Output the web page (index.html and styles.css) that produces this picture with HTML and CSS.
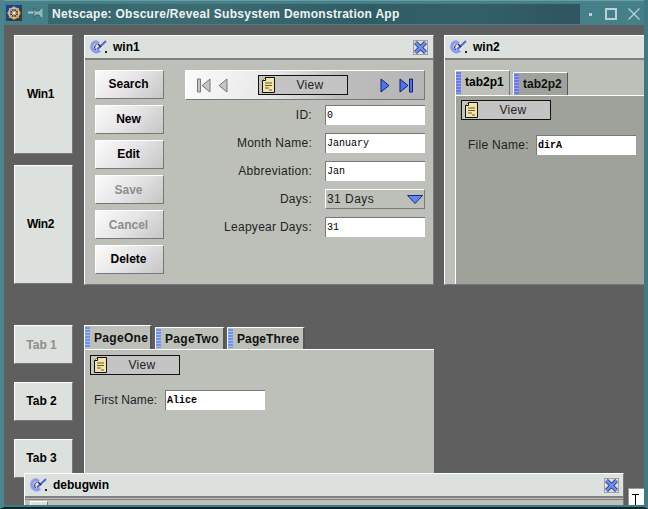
FILE: index.html
```html
<!DOCTYPE html>
<html lang="en">
<head>
<meta charset="utf-8">
<title>Netscape: Obscure/Reveal Subsystem Demonstration App</title>
<link rel="stylesheet" href="styles.css">
</head>
<body>
<svg class="defs" width="0" height="0" aria-hidden="true">
  <defs>
    <symbol id="note" viewBox="0 0 13 16">
      <path d="M3.500.5H12.500V15.500H.5V3.500Z" fill="#f3e3a6" stroke="#111"/>
      <path d="M3.500.5V3.500H.5" fill="#fff8d8" stroke="#111"/>
      <path d="M3 6H10M3 8.500H10M3 11H7M7 13H10" stroke="#6b5f30" fill="none"/>
    </symbol>
    <symbol id="winicon" viewBox="0 0 18 14">
      <path d="M8.500 3.500C6.500 1 2 1.500 1.800 6.500C1.600 11 6.500 13.500 10 10.500" fill="none" stroke="#8d9af2" stroke-width="3.200"/>
      <path d="M5.500 10C4 8 4.500 5 6.500 4.500" fill="none" stroke="#1c1c44" stroke-width="1"/>
      <path d="M7 9.500L16 1" fill="none" stroke="#5563d8" stroke-width="2"/>
      <path d="M8 4L11 7" stroke="#20204a" stroke-width="1.200"/>
      <rect x="15" y="11" width="2" height="2" fill="#222"/>
    </symbol>
    <symbol id="closex" viewBox="0 0 15 15">
      <rect x=".5" y=".5" width="14" height="14" fill="#dde1dd" stroke="#a0a0a0"/>
      <path d="M2.500 2.500L12.500 12.500M12.500 2.500L2.500 12.500" stroke="#14204f" stroke-width="4"/>
      <path d="M2.500 2.500L12.500 12.500M12.500 2.500L2.500 12.500" stroke="#6a8cf5" stroke-width="2.800"/>
    </symbol>
  </defs>
</svg>

<div class="screen">
  <header class="titlebar">
    <svg class="app-icon" width="16" height="16" viewBox="0 0 16 16">
      <rect width="16" height="16" fill="#1d3f9c"/>
      <path d="M0 16L16 0V16Z" fill="#3a3a44"/>
      <circle cx="8" cy="8" r="5" fill="none" stroke="#e2bf72" stroke-width="2"/>
      <path d="M8 1V15M1 8H15M3 3L13 13M13 3L3 13" stroke="#d8b468"/>
      <circle cx="8" cy="8" r="1.500" fill="#fff0c0"/>
    </svg>
    <svg class="pin-icon" width="15" height="10" viewBox="0 0 15 10">
      <path d="M0 4.500H6" stroke="#a3c7c9" stroke-width="2"/>
      <path d="M6 0L8 3H11L13 0H15V10H13L11 7H8L6 10Z" fill="#8fb8bd" stroke="#143c44" stroke-width=".5"/>
    </svg>
    <div class="title-strip">Netscape: Obscure/Reveal Subsystem Demonstration App</div>
    <div class="wm-buttons">
      <span class="wm-min"></span>
      <span class="wm-max"></span>
      <svg class="wm-close" width="12" height="12" viewBox="0 0 12 12"><path d="M.5.5L11.500 11.500M11.500.5L.5 11.500" stroke="#b9d3d4" stroke-width="1.200"/></svg>
    </div>
  </header>

  <main class="desktop">
    <section class="row row-top">
      <nav class="side side-win">
        <button class="nav-btn tall">Win1</button>
        <button class="nav-btn tall">Win2</button>
      </nav>

      <article class="window win1">
        <div class="win-title">
          <svg class="win-icon" width="18" height="14"><use href="#winicon"/></svg>
          <span class="win-name">win1</span>
          <svg class="win-close" width="15" height="15"><use href="#closex"/></svg>
        </div>
        <div class="win1-body">
          <div class="actions">
            <button class="act">Search</button>
            <button class="act">New</button>
            <button class="act">Edit</button>
            <button class="act off">Save</button>
            <button class="act off">Cancel</button>
            <button class="act">Delete</button>
          </div>
          <div class="main-col">
            <div class="toolbar">
              <div class="nav-group">
                <svg width="14" height="15" viewBox="0 0 14 15"><path d="M.5 1H3.500V14H.5Z M13 1V14L5 7.500Z" fill="#c4c6c2" stroke="#777"/></svg>
                <svg width="10" height="15" viewBox="0 0 10 15"><path d="M9 1V14L1 7.500Z" fill="#c4c6c2" stroke="#777"/></svg>
              </div>
              <div class="view-box"><svg width="13" height="16"><use href="#note"/></svg><span>View</span></div>
              <div class="nav-group next">
                <svg width="10" height="15" viewBox="0 0 10 15"><path d="M1 1V14L9 7.500Z" fill="#4d73ee" stroke="#141f6a"/></svg>
                <svg width="14" height="15" viewBox="0 0 14 15"><path d="M1 1V14L9 7.500Z" fill="#4d73ee" stroke="#141f6a"/><path d="M10.500 1H13.500V14H10.500Z" fill="#4d73ee" stroke="#141f6a"/></svg>
              </div>
            </div>
            <div class="form">
              <label class="lbl">ID:</label><div class="field">0</div>
              <label class="lbl">Month Name:</label><div class="field">January</div>
              <label class="lbl">Abbreviation:</label><div class="field">Jan</div>
              <label class="lbl">Days:</label>
              <div class="select"><span>31 Days</span><svg width="16" height="9" viewBox="0 0 16 9"><path d="M.5.5H15.500L8 8.500Z" fill="#5f86f5" stroke="#1c2c70"/></svg></div>
              <label class="lbl">Leapyear Days:</label><div class="field">31</div>
            </div>
          </div>
        </div>
      </article>

      <article class="window win2">
        <div class="win-title">
          <svg class="win-icon" width="18" height="14"><use href="#winicon"/></svg>
          <span class="win-name">win2</span>
        </div>
        <div class="win2-body">
          <div class="tabs2">
            <div class="tab2 active"><i class="grip"></i>tab2p1</div>
            <div class="tab2"><i class="grip"></i>tab2p2</div>
          </div>
          <div class="pane2">
            <div class="view-box"><svg width="13" height="16"><use href="#note"/></svg><span>View</span></div>
            <div class="line line2">
              <label class="lbl plain file-label">File Name:</label><div class="field heavy">dirA</div>
            </div>
          </div>
        </div>
      </article>
    </section>

    <section class="row row-bottom">
      <nav class="side side-tab">
        <button class="nav-btn short off">Tab 1</button>
        <button class="nav-btn short">Tab 2</button>
        <button class="nav-btn short">Tab 3</button>
      </nav>
      <div class="pages">
        <div class="tabs3">
          <div class="tab3 active"><i class="grip"></i>PageOne</div>
          <div class="tab3 two"><i class="grip"></i>PageTwo</div>
          <div class="tab3 three"><i class="grip"></i>PageThree</div>
        </div>
        <div class="pane3">
          <div class="view-box"><svg width="13" height="16"><use href="#note"/></svg><span>View</span></div>
          <div class="line line3">
            <label class="lbl plain first-label">First Name:</label><div class="field heavy">Alice</div>
          </div>
        </div>
      </div>
    </section>

    <article class="window debugwin">
      <div class="win-title">
        <svg class="win-icon" width="18" height="14"><use href="#winicon"/></svg>
        <span class="win-name">debugwin</span>
        <svg class="win-close" width="15" height="15"><use href="#closex"/></svg>
      </div>
      <div class="debug-body"><span class="debug-btn"></span></div>
    </article>

    <div class="cursor-box"><svg width="7" height="12" viewBox="0 0 7 12"><path d="M0 .5H7M0 11.500H7M3.500 0V12" stroke="#000"/></svg></div>
  </main>
</div>
</body>
</html>
```

FILE: styles.css
```css
* { box-sizing: border-box; }
html, body { margin: 0; padding: 0; background: #5f5f5f; }
body { width: 648px; height: 509px; overflow: hidden; font-family: "Liberation Sans", Arial, sans-serif; font-size: 12px; color: #111; }
.defs { position: absolute; }
.screen { width: 648px; height: 509px; display: flex; flex-direction: column; background: #3f7a84; border-bottom: 2px solid #10262b; border-left: 4px solid #4a858e; border-right: 4px solid #3f7a84; position: relative; overflow: hidden; }
.titlebar { height: 25px; margin: 0 -4px; padding: 3px 8px 0 6px; display: flex; align-items: flex-start; background: #457f88; border-top: 1px solid #6b9da3; flex: none; position: relative; }
.app-icon { margin-top: 1px; flex: none; }
.pin-icon { margin: 4px 0 0 6px; flex: none; }
.title-strip { width: 532px; height: 20px; margin-left: 5px; padding-left: 4px; line-height: 20px; font-weight: bold; font-size: 12px; letter-spacing: .28px; color: #eef3f3; background: linear-gradient(90deg, #37676f, #3c6b72 30%, #2f5d66 60%, #345f68 80%, #2e5560); white-space: nowrap; flex: none; }
.wm-buttons { display: flex; align-items: center; justify-content: flex-end; height: 20px; margin-left: auto; }
.wm-min { width: 3px; height: 3px; background: #b9d3d4; margin-right: 13px; }
.wm-max { width: 12px; height: 12px; border: 2px solid #b9d3d4; margin-right: 11px; }

.desktop { flex: 1; position: relative; background: #5f5f5f; padding: 10px 0 0 10px; overflow: hidden; min-height: 0; border-bottom: 2px solid #3f7a84; }
.row { display: flex; align-items: flex-start; }
.row-top { gap: 11px; height: 250px; width: 700px; }
.row-bottom { gap: 11px; margin-top: 40px; width: 700px; }
.side { width: 59px; display: flex; flex-direction: column; flex: none; }
.side-win { gap: 11px; }
.side-tab { gap: 18px; }
.nav-btn { display: block; width: 59px; font: bold 12px "Liberation Sans", Arial, sans-serif; color: #000; background: #dde1dd; border: 1px solid; border-color: #fff #777 #777 #fff; }
.nav-btn.tall { height: 119px; padding: 0 6px 2px 0; letter-spacing: -.4px; }
.nav-btn.short { height: 39px; padding: 0 4px 2px 0; }
.nav-btn.off { color: #8c8f8c; padding-bottom: 0; }

.window { background: #bcc0b9; border-top: 1px solid #fff; border-left: 1px solid #fff; border-bottom: 1px solid #777; flex: none; height: 250px; display: flex; flex-direction: column; }
.win1 { width: 350px; border-right: 1px solid #777; }
.win2 { width: 210px; margin-left: -1px; }
.win-title { height: 24px; display: flex; align-items: center; padding: 0 5px; background: #dde1dd; border-bottom: 2px solid #7f807e; flex: none; }
.win-name { font-weight: bold; font-size: 12px; margin-left: 5px; color: #000; }
.win-close { margin-left: auto; }

.win1-body { display: flex; padding: 10px 0 0 10px; gap: 21px; }
.actions { display: flex; flex-direction: column; gap: 6px; width: 69px; flex: none; }
.act { display: block; height: 29px; padding: 0 2px 2px 0; font: bold 12px "Liberation Sans", Arial, sans-serif; color: #000; border: 1px solid; border-color: #fff #777 #777 #fff; background: linear-gradient(135deg, #fbfbfb, #e6e4e6 50%, #c6c6c6); }
.act.off { color: #8c8f8c; padding-bottom: 0; }
.main-col { width: 240px; display: flex; flex-direction: column; flex: none; }
.toolbar { height: 30px; display: flex; align-items: center; padding: 0 0 0 11px; border: 1px solid; border-color: #fff #777 #777 #fff; background: linear-gradient(100deg, #fbfbfb 0%, #e8e8e8 35%, #bdbdbd 65%, #b5b5b5 100%); }
.toolbar .view-box { margin: 0 32px 0 30px; }
.nav-group { display: flex; align-items: center; gap: 7px; }
.nav-group.next { gap: 9px; }
.view-box { width: 90px; height: 20px; display: flex; align-items: center; padding-left: 3px; background: #c4c4c4; border: 1px solid #111; flex: none; }
.view-box span { flex: 1; text-align: center; font-size: 12px; letter-spacing: .3px; padding-right: 2px; color: #222; }
.form { display: grid; grid-template-columns: 127px 100px; grid-auto-rows: 20px; row-gap: 8px; column-gap: 13px; margin-top: 5px; }
.lbl { text-align: right; line-height: 20px; font-size: 12px; letter-spacing: .28px; color: #222; white-space: nowrap; }
.lbl.plain { text-align: left; flex: none; }
.file-label { width: 68px; }
.first-label { width: 71px; letter-spacing: .1px; }
.field { width: 100px; height: 20px; background: #fff; border-top: 1px solid #777; border-left: 1px solid #777; padding-left: 1px; font: 10px/20px "Liberation Mono", "Courier New", monospace; color: #000; flex: none; }
.field.heavy { font-weight: bold; }
.select { width: 100px; height: 20px; display: flex; align-items: center; justify-content: space-between; padding: 0 1px; border: 1px solid; border-color: #fff #777 #777 #fff; font-size: 12px; letter-spacing: .45px; color: #222; }

.win2-body { padding: 10px 0 0 10px; flex: 1; display: flex; flex-direction: column; min-height: 0; }
.tabs2 { display: flex; align-items: flex-end; height: 25px; flex: none; }
.tab2 { width: 55px; height: 23px; position: relative; margin-right: 3px; padding-left: 9px; line-height: 23px; font-weight: bold; font-size: 12px; background: #9ea29b; border-top: 1px solid #fff; border-left: 1px solid #fff; border-right: 1px solid #555; color: #111; }
.tab2.active { height: 25px; background: #bcc0b9; line-height: 22px; border-right: 1px solid #777; color: #000; }
.grip { position: absolute; left: 0; top: 1px; bottom: 1px; width: 5px; background: repeating-linear-gradient(180deg, #6c78f0 0 2px, #95a4f4 2px 3px); }
.pane2 { flex: 1; background: #9ea29b; border-top: 1px solid #fff; border-left: 1px solid #fff; padding: 4px 0 0 5px; }
.line { display: flex; align-items: center; }
.line2 { margin: 15px 0 0 7px; }
.line3 { margin: 15px 0 0 4px; }

.pages { width: 350px; height: 180px; flex: none; display: flex; flex-direction: column; }
.tabs3 { height: 24px; display: flex; align-items: flex-end; flex: none; }
.tab3 { position: relative; height: 24px; width: 68px; padding-left: 9px; line-height: 24px; font-weight: bold; font-size: 12px; letter-spacing: .3px; background: #bcc0b9; border-top: 1px solid #fff; border-left: 1px solid #fff; border-right: 2px solid #555; color: #111; white-space: nowrap; }
.tab3.two { width: 70px; height: 22px; line-height: 22px; margin-left: 3px; }
.tab3.three { width: 78px; height: 22px; line-height: 22px; margin-left: 2px; letter-spacing: .1px; }
.tab3 .grip { width: 5px; background: repeating-linear-gradient(180deg, #6f92ea 0 2px, #a8bdf0 2px 3px); }
.pane3 { flex: 1; background: #bcc0b9; border-top: 1px solid #fff; border-left: 1px solid #fff; padding: 5px 0 0 5px; }

.debugwin { position: absolute; left: 20px; top: 448px; width: 600px; height: 40px; background: #bcc0b9; border-right: 1px solid #777; border-bottom: 0; }
.debugwin .win-title { padding: 0 4px 0 5px; }
.debug-body { height: 12px; margin-top: 1px; border-top: 1px solid #7f807e; padding: 1px 0 0 5px; }
.debug-btn { display: block; width: 18px; height: 10px; border: 1px solid; border-color: #fff #777 #777 #fff; background: #dde1dd; }
.cursor-box { position: absolute; left: 624px; top: 463px; width: 16px; height: 17px; background: #fff; border-left: 1px solid #999; border-top: 1px solid #999; padding: 5px 0 0 3px; }
.cursor-box svg { display: block; }
```
